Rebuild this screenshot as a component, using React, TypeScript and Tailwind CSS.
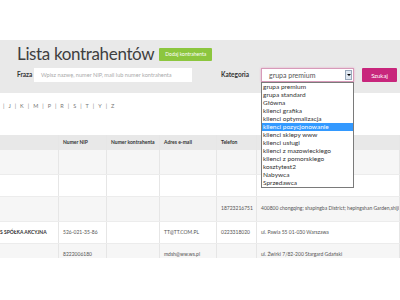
import React from 'react';

const letters = ['J', 'K', 'M', 'P', 'R', 'S', 'T', 'Y', 'Z'];

const options = [
  'grupa premium',
  'grupa standard',
  'Główna',
  'klienci grafika',
  'klienci optymalizacja',
  'klienci pozycjonowanie',
  'klienci sklepy www',
  'klienci usługi',
  'klienci z mazowieckiego',
  'klienci z pomorskiego',
  'kosztytest2',
  'Nabywca',
  'Sprzedawca',
];

type Row = {
  name?: string;
  nip?: string;
  num?: string;
  email?: string;
  phone?: string;
  address?: string;
  h: string;
};

const rows: Row[] = [
  { h: 'h-[25px]' },
  { h: 'h-[22px]' },
  { h: 'h-[25px]', phone: '18723216751', address: '400800 chongqing; shapingba District; hepingshan Garden,shijing' },
  {
    h: 'h-[22px]',
    name: 'S SPÓŁKA AKCYJNA',
    nip: '526-021-35-86',
    email: 'TT@TT.COM.PL',
    phone: '0223318020',
    address: 'ul. Pawia 55 01-030 Warszawa',
  },
  { h: 'h-[23px]', nip: '8222006180', email: 'mdsh@ww.ws.pl', address: 'ul. Żwirki 7/82-200 Stargard Gdański' },
];

const cols = 'grid grid-cols-[59px_48px_53px_57px_40px_1fr]';
const base = 'border-r border-[#e6e6e6] flex items-center whitespace-nowrap overflow-hidden';
const cell = base + ' pl-[4px]';

export default function App() {
  return (
    <div className="w-[400px] h-[300px] overflow-hidden bg-white font-['Lato',sans-serif] text-[#444]">
      <div className="h-[40px]" />

      {/* Header band */}
      <div className="bg-[#e9e9e9] h-[53px] pl-[17px] pt-[3px]">
        <div className="flex items-center gap-[5px]">
          <h1 className="text-[17px] leading-[22px] text-[#3f3f3f] tracking-[-0.35px]">Lista kontrahentów</h1>
          <button className="bg-[#8cc63e] text-white text-[5px] h-[13px] w-[53px] rounded-[1px] mt-[1px]">
            Dodaj kontrahenta
          </button>
        </div>

        <div className="flex items-center mt-[3px]">
          <span className="text-[6.5px] font-bold text-[#333] w-[17px]">Fraza</span>
          <div className="w-[158px] h-[14px] bg-white flex items-center pl-[7px] text-[5.6px] text-[#aaa]">
            Wpisz nazwę, numer NIP, mail lub numer kontrahenta
          </div>
          <span className="text-[6.5px] font-bold text-[#333] ml-[29px] w-[40px]">Kategoria</span>

          <div className="relative">
            <div className="w-[93px] h-[14px] bg-white border border-[#d79ab9] shadow-[0_0_2px_#e6a8c8] flex items-center">
              <span className="flex-1 pl-[7px] text-[7px] text-[#555]">grupa premium</span>
              <span className="w-[7px] h-[10px] mr-[1px] bg-[#dfe7f1] border border-[#9aaabd] flex items-center justify-center">
                <span className="w-0 h-0 border-l-[2px] border-r-[2px] border-t-[2px] border-l-transparent border-r-transparent border-t-black" />
              </span>
            </div>
            <div className="absolute left-0 top-[14px] w-[93px] bg-white border border-[#7a7a7a] z-10">
              {options.map((o) => (
                <div
                  key={o}
                  className={
                    'h-[8px] leading-[8px] pl-[1px] text-[6.5px] ' +
                    (o === 'klienci pozycjonowanie' ? 'bg-[#3399ff] text-white' : 'text-[#333]')
                  }
                >
                  {o}
                </div>
              ))}
            </div>
          </div>

          <button className="ml-[8px] w-[35px] h-[14px] bg-[#c8267c] text-white text-[6px] rounded-[1px]">
            Szukaj
          </button>
        </div>
      </div>

      {/* Letters */}
      <div className="h-[42px] pt-[9px] pl-[3px] flex items-start text-[5.5px] text-[#777]">
        <span>|</span>
        {letters.map((l, i) => (
          <span key={l} className="flex">
            <span className="ml-[4px]">{l}</span>
            {i < letters.length - 1 && <span className="ml-[4px]">|</span>}
          </span>
        ))}
      </div>

      {/* Table */}
      <div className="h-[123px] overflow-hidden text-[5px] text-[#555]">
        <div className={cols + ' h-[15px] bg-[#e8e8e8] font-bold text-[#333]'}>
          <div className={cell} />
          <div className={cell}>Numer NIP</div>
          <div className={cell}>Numer kontrahenta</div>
          <div className={cell}>Adres e-mail</div>
          <div className={cell}>Telefon</div>
          <div className={cell} />
        </div>
        {rows.map((r, i) => (
          <div
            key={i}
            className={cols + ' border-b border-[#ececec] ' + r.h + ' ' + (i % 2 === 0 ? 'bg-[#f6f6f6]' : 'bg-white')}
          >
            <div className={base + ' font-bold text-[#333]'}>{r.name}</div>
            <div className={cell}>{r.nip}</div>
            <div className={cell}>{r.num}</div>
            <div className={cell}>{r.email}</div>
            <div className={cell}>{r.phone}</div>
            <div className={cell}>{r.address}</div>
          </div>
        ))}
      </div>
    </div>
  );
}
